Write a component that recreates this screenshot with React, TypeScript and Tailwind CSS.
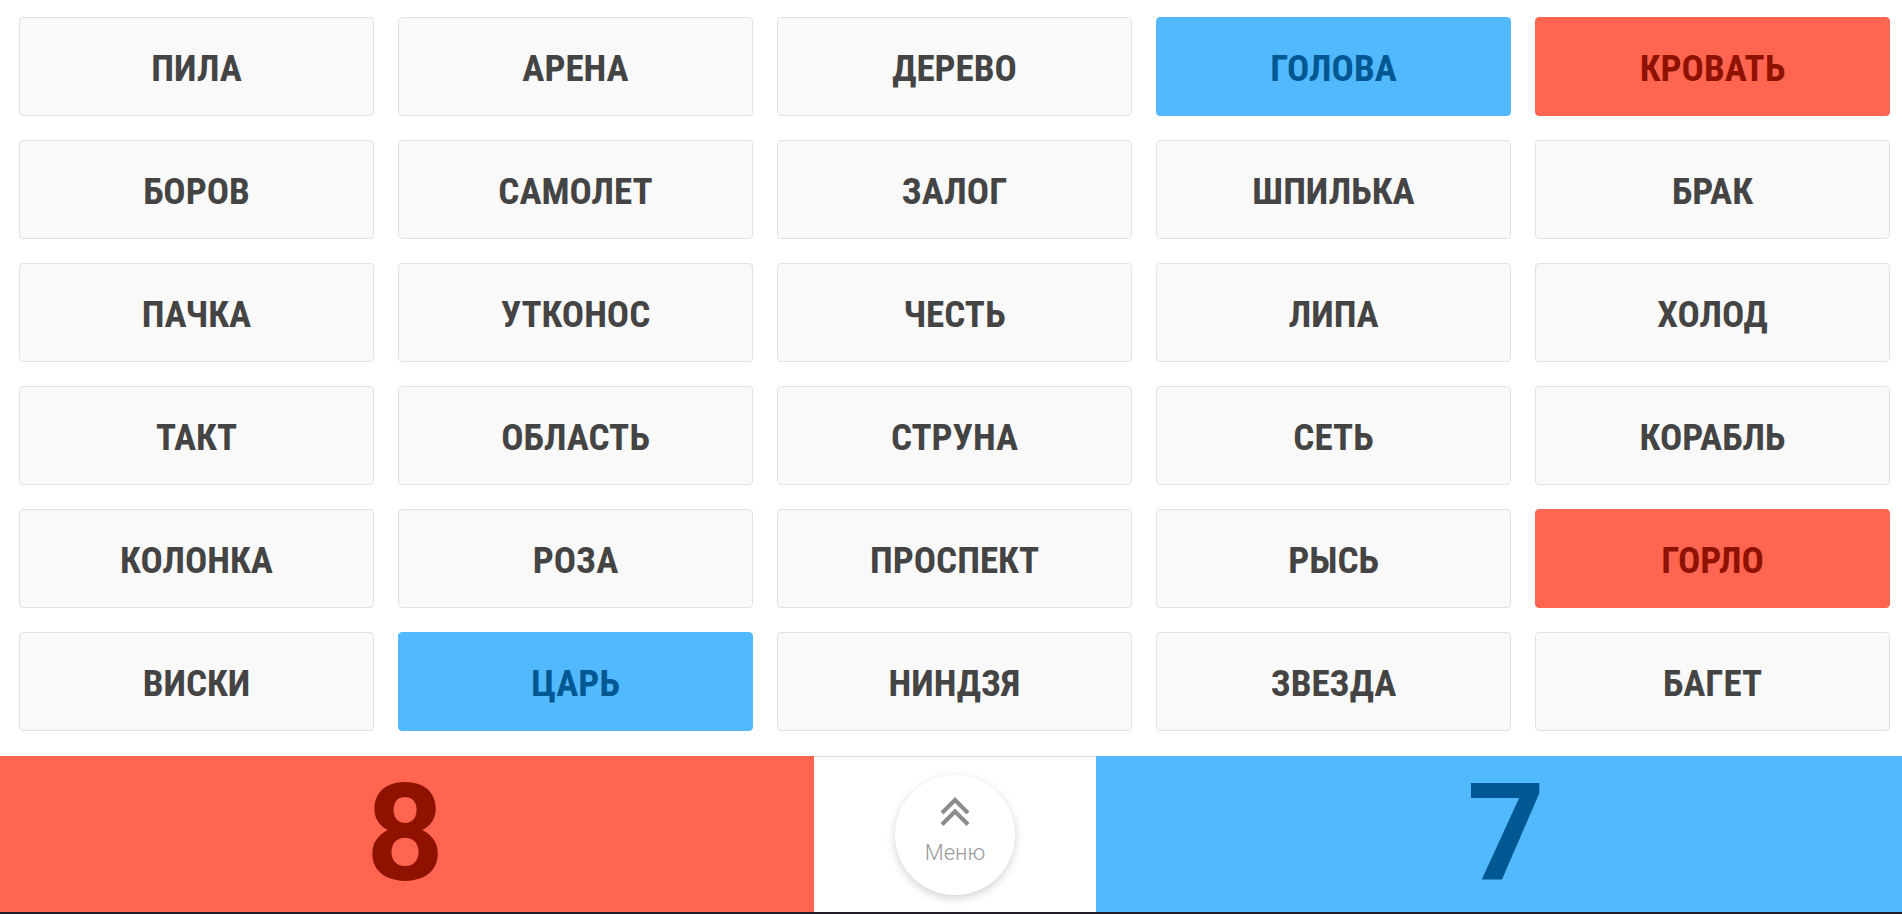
type Team = "blue" | "red" | null;

interface Word {
  text: string;
  team: Team;
}

const words: Word[] = [
  { text: "ПИЛА", team: null },
  { text: "АРЕНА", team: null },
  { text: "ДЕРЕВО", team: null },
  { text: "ГОЛОВА", team: "blue" },
  { text: "КРОВАТЬ", team: "red" },
  { text: "БОРОВ", team: null },
  { text: "САМОЛЕТ", team: null },
  { text: "ЗАЛОГ", team: null },
  { text: "ШПИЛЬКА", team: null },
  { text: "БРАК", team: null },
  { text: "ПАЧКА", team: null },
  { text: "УТКОНОС", team: null },
  { text: "ЧЕСТЬ", team: null },
  { text: "ЛИПА", team: null },
  { text: "ХОЛОД", team: null },
  { text: "ТАКТ", team: null },
  { text: "ОБЛАСТЬ", team: null },
  { text: "СТРУНА", team: null },
  { text: "СЕТЬ", team: null },
  { text: "КОРАБЛЬ", team: null },
  { text: "КОЛОНКА", team: null },
  { text: "РОЗА", team: null },
  { text: "ПРОСПЕКТ", team: null },
  { text: "РЫСЬ", team: null },
  { text: "ГОРЛО", team: "red" },
  { text: "ВИСКИ", team: null },
  { text: "ЦАРЬ", team: "blue" },
  { text: "НИНДЗЯ", team: null },
  { text: "ЗВЕЗДА", team: null },
  { text: "БАГЕТ", team: null },
];

const cardClass = (team: Team) => {
  if (team === "blue") return "bg-[#52b9ff] border-[#52b9ff] text-[#005893]";
  if (team === "red") return "bg-[#ff6550] border-[#ff6550] text-[#8f1200]";
  return "bg-[#f9f9f9] border-[#e2e2e2] text-[#444444]";
};

const WordCard = ({ word }: { word: Word }) => (
  <div
    className={`h-[99px] flex items-center justify-center rounded-[4px] border pt-[3px] ${cardClass(
      word.team
    )}`}
  >
    <span className="font-['Roboto',sans-serif] font-bold text-[37px] leading-none [font-stretch:75%]">
      {word.text}
    </span>
  </div>
);

const MenuButton = () => (
  <div className="w-[120px] h-[120px] rounded-full bg-white shadow-[0_3px_10px_rgba(0,0,0,0.18)] flex flex-col items-center justify-center">
    <svg width="34" height="32" viewBox="0 0 34 32" className="-mt-[4px]">
      <path
        d="M4 17 L17 4 L30 17"
        fill="none"
        stroke="#8c8c8c"
        strokeWidth="4.2"
      />
      <path
        d="M4 28.5 L17 15.5 L30 28.5"
        fill="none"
        stroke="#8c8c8c"
        strokeWidth="4.2"
      />
    </svg>
    <div className="font-['Roboto',sans-serif] font-light text-[22px] leading-none text-[#9a9a9a] mt-[14px] mb-[6px]">
      Меню
    </div>
  </div>
);

const App = () => {
  return (
    <div className="w-full h-[914px] bg-white flex flex-col overflow-hidden">
      <div className="grid grid-cols-5 gap-[24px] pt-[17px] pl-[19px] pr-[12px] pb-[25px]">
        {words.map((w) => (
          <WordCard key={w.text} word={w} />
        ))}
      </div>
      <div className="flex h-[156px]">
        <div className="w-[814px] bg-[#ff6550] flex items-center justify-center pr-[4px]">
          <span className="font-['Roboto',sans-serif] font-bold text-[136px] leading-[1.1] text-[#8f1200]">
            8
          </span>
        </div>
        <div className="flex-1 border-t border-[#dddddd] flex items-center justify-center">
          <MenuButton />
        </div>
        <div className="w-[806px] bg-[#52b9ff] flex items-center justify-center pl-[14px]">
          <span className="font-['Roboto',sans-serif] font-bold text-[136px] leading-[1.1] text-[#005893]">
            7
          </span>
        </div>
      </div>
      <div className="h-[2px] bg-[#221c26]" />
    </div>
  );
};

export default App;
